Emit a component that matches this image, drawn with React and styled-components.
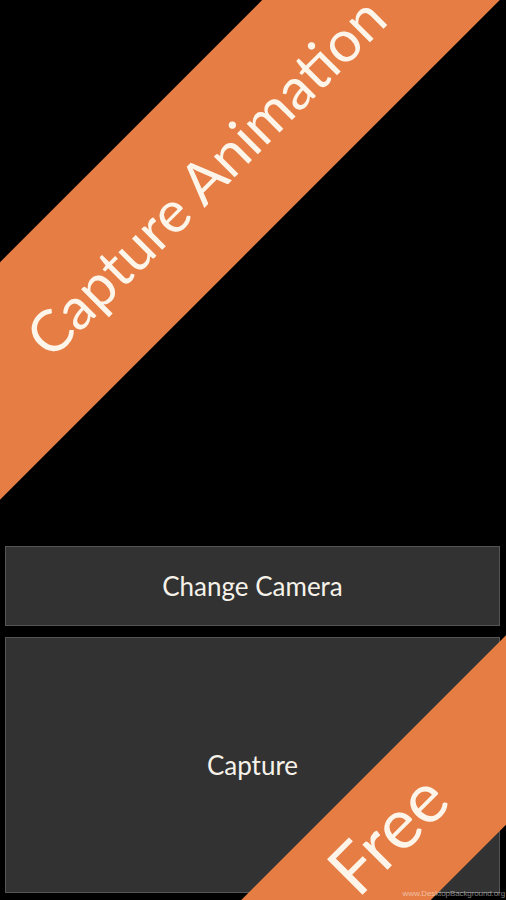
import React from "react";
import styled, { createGlobalStyle } from "styled-components";

const GlobalStyle = createGlobalStyle`
  html, body {
    margin: 0;
    padding: 0;
    background: #000;
  }
  body {
    font-family: Lato, "Open Sans", "Liberation Sans", sans-serif;
  }
`;

const Screen = styled.div`
  position: relative;
  width: 506px;
  height: 900px;
  overflow: hidden;
  background: #000;
  display: flex;
  flex-direction: column;
`;

const Preview = styled.div`
  flex: none;
  height: 546px;
  background: #000;
`;

const Controls = styled.div`
  flex: 1;
  display: flex;
  flex-direction: column;
  gap: 11px;
  padding: 0 6px 7px 5px;
`;

const ActionButton = styled.button`
  flex: ${(p) => (p.$grow ? "1" : "none")};
  height: ${(p) => (p.$grow ? "auto" : "80px")};
  display: flex;
  align-items: center;
  justify-content: center;
  background: #323232;
  border: 1px solid #555;
  color: #f6f2ea;
  font-family: Lato, "Open Sans", "Liberation Sans", sans-serif;
  font-size: 26px;
  padding: 0;
  cursor: pointer;
`;

// diagonal promo banners laid over the screen
const Ribbon = styled.div`
  position: absolute;
  left: ${(p) => p.$cx - p.$len / 2}px;
  top: ${(p) => p.$cy - p.$thick / 2}px;
  width: ${(p) => p.$len}px;
  height: ${(p) => p.$thick}px;
  box-sizing: border-box;
  padding-bottom: ${(p) => p.$lift || 0}px;
  transform: rotate(-45deg);
  transform-origin: center;
  background: #e57d44;
  display: flex;
  align-items: center;
  justify-content: center;
  pointer-events: none;
`;

const RibbonText = styled.span`
  color: #fdf5e9;
  font-family: Lato, "Open Sans", "Liberation Sans", sans-serif;
  font-size: ${(p) => p.$size}px;
  white-space: nowrap;
  line-height: 1;
`;

const Watermark = styled.div`
  position: absolute;
  right: 1px;
  bottom: 2px;
  font-family: "Liberation Sans", Arial, sans-serif;
  font-size: 8px;
  letter-spacing: -0.1px;
  color: rgba(255, 255, 255, 0.5);
`;

const App = () => {
  return (
    <Screen>
      <GlobalStyle />
      <Preview />
      <Controls>
        <ActionButton>Change Camera</ActionButton>
        <ActionButton $grow>Capture</ActionButton>
      </Controls>
      <Ribbon $cx={205} $cy={176} $len={900} $thick={168}>
        <RibbonText $size={58}>Capture Animation</RibbonText>
      </Ribbon>
      <Ribbon $cx={395} $cy={841} $len={600} $thick={134} $lift={25}>
        <RibbonText $size={70}>Free</RibbonText>
      </Ribbon>
      <Watermark>www.DesktopBackground.org</Watermark>
    </Screen>
  );
};

export default App;
